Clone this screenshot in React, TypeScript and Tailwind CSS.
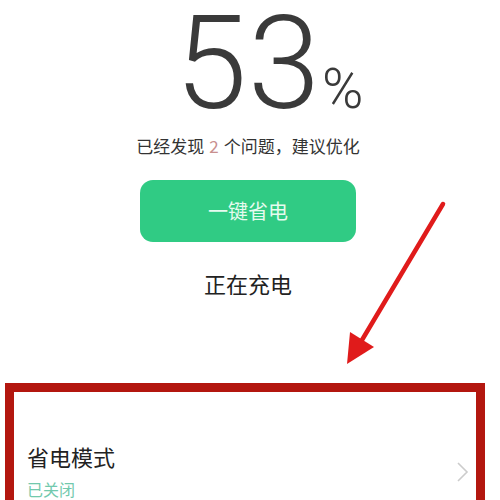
import React from "react";

export default function App() {
  const cjk = { fontFamily: '"Noto Sans CJK SC", "Noto Sans", sans-serif' };
  return (
    <div className="relative w-[500px] h-[500px] overflow-hidden bg-white" style={cjk}>
      <div className="flex flex-col items-center pr-[4px]">
        <div
          className="flex items-baseline leading-none font-light text-[#3a3a3a] mt-[-1px]"
          style={{ fontFamily: 'Roboto, "Liberation Sans", sans-serif' }}
        >
          <span className="w-[52px]" />
          <span className="text-[130px] tracking-[1px]">53</span>
          <span className="w-[52px] pl-[1px] text-[56px]">%</span>
        </div>
        <div className="mt-[7px] flex items-center gap-[5px] text-[17px] leading-[20px] text-[#333333]">
          <span>已经发现</span>
          <span className="text-[#c9908f]">2</span>
          <span>个问题，建议优化</span>
        </div>
        <button className="mt-[24px] w-[216px] h-[62px] rounded-[13px] bg-[#30cb84] text-[20px] text-[#e6fbef] flex items-center justify-center">
          一键省电
        </button>
        <div className="mt-[28px] text-[22px] leading-[26px] text-[#222222]">正在充电</div>
      </div>
      <div className="mt-[87px] ml-[5px] w-[480px] h-[140px] border-[9px] border-[#b3170f] bg-white">
        <div className="flex items-center justify-between pl-[13px] pr-[6px] pt-[51px]">
          <div className="flex flex-col">
            <span className="text-[22px] leading-[26px] text-[#222222]">省电模式</span>
            <span className="mt-[11px] text-[16px] leading-[18px] text-[#72c9ad]">已关闭</span>
          </div>
          <svg width="14" height="22" viewBox="0 0 14 22" className="mt-[2px]">
            <path d="M2 2 L11 11 L2 20" fill="none" stroke="#cccccc" strokeWidth="1.6" />
          </svg>
        </div>
      </div>
      <svg className="absolute left-0 top-0" width="500" height="500" viewBox="0 0 500 500">
        <line x1="443" y1="204" x2="362" y2="340" stroke="#e01b1b" strokeWidth="4.5" strokeLinecap="round" />
        <polygon points="347,364 350,332 374,347" fill="#e01b1b" />
      </svg>
    </div>
  );
}
